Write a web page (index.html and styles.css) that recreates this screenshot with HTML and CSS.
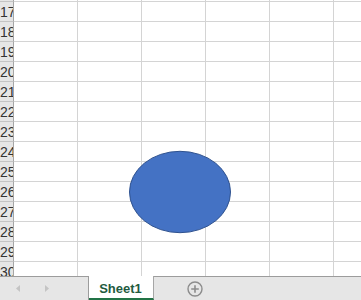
FILE: index.html
```html
<!DOCTYPE html>
<html>
<head>
<meta charset="utf-8">
<link rel="stylesheet" href="styles.css">
</head>
<body>
<div class="app">
  <div class="sheet">
    <div class="rows">
      <div class="row"><div class="rh">16</div><div class="c"></div><div class="c"></div><div class="c"></div><div class="c"></div><div class="c"></div><div class="c"></div></div>
      <div class="row"><div class="rh">17</div><div class="c"></div><div class="c"></div><div class="c"></div><div class="c"></div><div class="c"></div><div class="c"></div></div>
      <div class="row"><div class="rh">18</div><div class="c"></div><div class="c"></div><div class="c"></div><div class="c"></div><div class="c"></div><div class="c"></div></div>
      <div class="row"><div class="rh">19</div><div class="c"></div><div class="c"></div><div class="c"></div><div class="c"></div><div class="c"></div><div class="c"></div></div>
      <div class="row"><div class="rh">20</div><div class="c"></div><div class="c"></div><div class="c"></div><div class="c"></div><div class="c"></div><div class="c"></div></div>
      <div class="row"><div class="rh">21</div><div class="c"></div><div class="c"></div><div class="c"></div><div class="c"></div><div class="c"></div><div class="c"></div></div>
      <div class="row"><div class="rh">22</div><div class="c"></div><div class="c"></div><div class="c"></div><div class="c"></div><div class="c"></div><div class="c"></div></div>
      <div class="row"><div class="rh">23</div><div class="c"></div><div class="c"></div><div class="c"></div><div class="c"></div><div class="c"></div><div class="c"></div></div>
      <div class="row"><div class="rh">24</div><div class="c"></div><div class="c"></div><div class="c"></div><div class="c"></div><div class="c"></div><div class="c"></div></div>
      <div class="row"><div class="rh">25</div><div class="c"></div><div class="c"></div><div class="c"></div><div class="c"></div><div class="c"></div><div class="c"></div></div>
      <div class="row"><div class="rh">26</div><div class="c"></div><div class="c"></div><div class="c"></div><div class="c"></div><div class="c"></div><div class="c"></div></div>
      <div class="row"><div class="rh">27</div><div class="c"></div><div class="c"></div><div class="c"></div><div class="c"></div><div class="c"></div><div class="c"></div></div>
      <div class="row"><div class="rh">28</div><div class="c"></div><div class="c"></div><div class="c"></div><div class="c"></div><div class="c"></div><div class="c"></div></div>
      <div class="row"><div class="rh">29</div><div class="c"></div><div class="c"></div><div class="c"></div><div class="c"></div><div class="c"></div><div class="c"></div></div>
      <div class="row"><div class="rh">30</div><div class="c"></div><div class="c"></div><div class="c"></div><div class="c"></div><div class="c"></div><div class="c"></div></div>
    </div>
    <svg class="shape" width="104" height="86" viewBox="0 0 104 86">
      <ellipse cx="52" cy="43" rx="50.5" ry="40.7" fill="#4472c4" stroke="#2f528f" stroke-width="1"/>
    </svg>
  </div>
  <div class="tabbar">
    <div class="nav">
      <svg width="89" height="23" viewBox="0 0 89 23">
        <path d="M20 8 L16 11.5 L20 15 Z" fill="#c4c4c4"/>
        <path d="M45 8 L49 11.5 L45 15 Z" fill="#c4c4c4"/>
      </svg>
    </div>
    <div class="tab">Sheet1</div>
    <div class="rest">
      <svg class="add" width="18" height="18" viewBox="0 0 18 18">
        <circle cx="9" cy="9" r="7" fill="none" stroke="#8c8c8c" stroke-width="1.4"/>
        <path d="M9 5.2 V12.8 M5.2 9 H12.8" stroke="#8c8c8c" stroke-width="1.6"/>
      </svg>
    </div>
  </div>
</div>
</body>
</html>
```
FILE: styles.css
```css
html, body {
  margin: 0;
  padding: 0;
  background: #ffffff;
}
.app {
  width: 361px;
  height: 300px;
  overflow: hidden;
  display: flex;
  flex-direction: column;
  font-family: "Liberation Sans", Arial, sans-serif;
}
.sheet {
  position: relative;
  height: 276px;
  overflow: hidden;
  flex: none;
}
.rows {
  margin-top: -18px;
  display: flex;
  flex-direction: column;
}
.row {
  display: flex;
  height: 20px;
  flex: none;
}
.rh {
  width: 14px;
  flex: none;
  box-sizing: border-box;
  height: 20px;
  background: #e6e6e6;
  border-right: 1px solid #a6a6a6;
  border-bottom: 1px solid #c4c4c4;
  display: flex;
  justify-content: flex-end;
  align-items: center;
  padding-right: 2px;
  padding-top: 1px;
  overflow: hidden;
  font-size: 14px;
  color: #333333;
  white-space: nowrap;
  direction: rtl;
}
.c {
  width: 64px;
  flex: none;
  box-sizing: border-box;
  height: 20px;
  border-right: 1px solid #d4d4d4;
  border-bottom: 1px solid #d4d4d4;
}
.shape {
  position: absolute;
  left: 128px;
  top: 149px;
}
.tabbar {
  height: 24px;
  flex: none;
  display: flex;
  background: #e6e6e6;
}
.nav {
  width: 89px;
  flex: none;
  box-sizing: border-box;
  border-top: 1px solid #9c9c9c;
  border-right: 1px solid #9c9c9c;
  height: 24px;
}
.nav svg {
  display: block;
}
.tab {
  width: 65px;
  flex: none;
  box-sizing: border-box;
  background: #ffffff;
  border-right: 1px solid #a6a6a6;
  border-bottom: 2px solid #217346;
  height: 24px;
  font-size: 13px;
  font-weight: bold;
  color: #1f5b3f;
  display: flex;
  align-items: center;
  justify-content: center;
  padding-top: 2px;
  padding-right: 1px;
}
.rest {
  flex: 1;
  box-sizing: border-box;
  border-top: 1px solid #9c9c9c;
  height: 24px;
  position: relative;
}
.add {
  position: absolute;
  left: 32px;
  top: 3px;
}
```
